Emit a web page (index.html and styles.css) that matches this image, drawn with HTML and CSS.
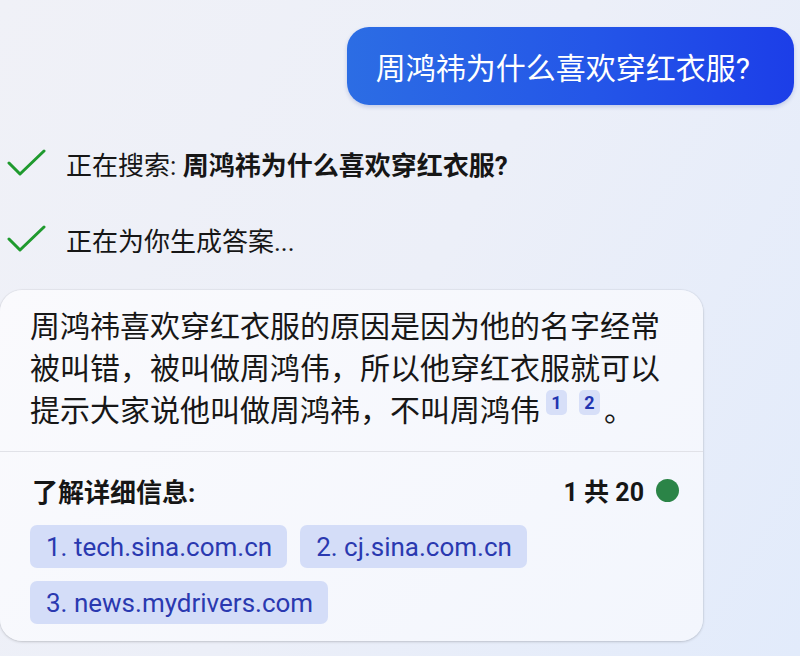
FILE: index.html
```html
<!DOCTYPE html>
<html lang="zh-CN">
<head>
<meta charset="utf-8">
<link rel="stylesheet" href="styles.css">
</head>
<body>
<div class="page">
  <div class="user-row">
    <div class="user-bubble">周鸿祎为什么喜欢穿红衣服?</div>
  </div>

  <div class="status first">
    <svg class="check" viewBox="0 0 40 30" width="40" height="30"><path d="M2 15 L13 26 L37 3" fill="none" stroke="#1f9a2e" stroke-width="3" stroke-linecap="round" stroke-linejoin="round"/></svg>
    <span>正在搜索: <b>周鸿祎为什么喜欢穿红衣服?</b></span>
  </div>
  <div class="status">
    <svg class="check" viewBox="0 0 40 30" width="40" height="30"><path d="M2 15 L13 26 L37 3" fill="none" stroke="#1f9a2e" stroke-width="3" stroke-linecap="round" stroke-linejoin="round"/></svg>
    <span>正在为你生成答案...</span>
  </div>

  <div class="card">
    <div class="answer">周鸿祎喜欢穿红衣服的原因是因为他的名字经常被叫错，被叫做周鸿伟，所以他穿红衣服就可以提示大家说他叫做周鸿祎，不叫周鸿伟<span class="ref">1</span><span class="ref">2</span>。</div>
    <div class="footer">
      <div class="footer-head">
        <span class="learn">了解详细信息:</span>
        <span class="count">1 共 20<span class="dot"></span></span>
      </div>
      <div class="chips">
        <span class="chip">1. tech.sina.com.cn</span>
        <span class="chip">2. cj.sina.com.cn</span>
        <span class="chip">3. news.mydrivers.com</span>
      </div>
    </div>
  </div>
</div>
</body>
</html>
```

FILE: styles.css
```css
html, body {
  margin: 0;
  padding: 0;
}
body {
  width: 800px;
  height: 656px;
  overflow: hidden;
  background: linear-gradient(120deg, #f0f1f7 0%, #eceff8 50%, #e2ebfb 100%);
  font-family: Roboto, "Noto Sans CJK SC", sans-serif;
  color: #161616;
}
.page {
  padding-top: 27px;
}
.user-row {
  display: flex;
  justify-content: flex-end;
  padding-right: 6px;
}
.user-bubble {
  height: 78px;
  display: flex;
  align-items: center;
  padding: 0 44px 0 29px;
  border-radius: 22px;
  background: linear-gradient(90deg, #2c6de4 0%, #2456e8 55%, #1c3ee8 100%);
  color: #fff;
  font-size: 30px;
  box-shadow: 0 2px 4px rgba(30, 60, 160, 0.2);
}
.status {
  display: flex;
  align-items: center;
  height: 40px;
  margin-top: 36px;
  font-size: 26px;
}
.status.first {
  margin-top: 38px;
}
.check {
  margin-left: 7px;
  margin-right: 19px;
  flex: none;
}
.status b {
  font-weight: 700;
}
.card {
  margin-top: 31px;
  width: 703px;
  box-sizing: border-box;
  background: linear-gradient(135deg, #fafafd 0%, #f3f6fd 100%);
  border-radius: 22px;
  box-shadow: 0 1px 3px rgba(0, 0, 0, 0.16), 0 0 0 1px rgba(0, 0, 0, 0.03);
  overflow: hidden;
}
.answer {
  padding: 16px 30px 19px 30px;
  font-size: 30px;
  line-height: 42px;
  color: #171717;
  border-bottom: 1px solid #e1e2e8;
}
.ref {
  display: inline-block;
  width: 21px;
  height: 25px;
  margin-left: 6px;
  line-height: 25px;
  text-align: center;
  font-size: 18px;
  font-weight: 700;
  color: #1f34b0;
  background: #d7dff8;
  border-radius: 5px;
  vertical-align: 12px;
}
.ref + .ref {
  margin-left: 12px;
  margin-right: 4px;
}
.footer {
  padding: 20px 24px 17px 30px;
}
.footer-head {
  display: flex;
  justify-content: space-between;
  align-items: center;
  height: 36px;
}
.learn {
  font-size: 26px;
  font-weight: 700;
  padding-left: 2px;
}
.count {
  display: flex;
  align-items: center;
  font-size: 25px;
  font-weight: 700;
}
.dot {
  display: inline-block;
  width: 23px;
  height: 23px;
  border-radius: 50%;
  background: #2b8447;
  margin-left: 12px;
}
.chips {
  margin-top: 17px;
  display: flex;
  flex-wrap: wrap;
  gap: 13px;
  width: 520px;
}
.chip {
  display: inline-flex;
  align-items: center;
  height: 43px;
  padding: 0 15px 0 16px;
  border-radius: 7px;
  background: #d4ddf8;
  color: #2a39b0;
  font-size: 26px;
}
```
